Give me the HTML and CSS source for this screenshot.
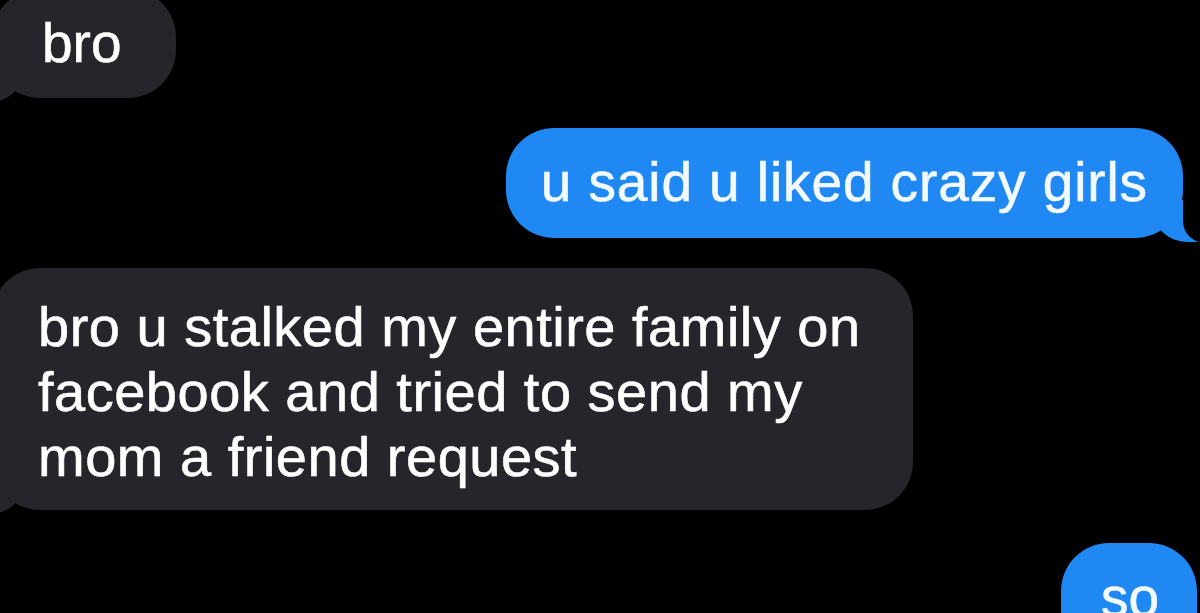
FILE: index.html
```html
<!DOCTYPE html>
<html lang="en">
<head>
<meta charset="utf-8">
<title>Messages</title>
<link rel="stylesheet" href="styles.css">
</head>
<body>
<main class="thread">
  <div class="bubble them first">bro</div>
  <div class="bubble me second">u said u liked crazy girls</div>
  <div class="bubble them third">bro u stalked my entire family on<br>facebook and tried to send my<br>mom a friend request</div>
  <div class="bubble me last">so</div>
</main>
</body>
</html>
```
FILE: styles.css
```css
html, body {
  margin: 0;
  padding: 0;
  background: #000;
  height: 100%;
  overflow: hidden;
}

.thread {
  display: flex;
  flex-direction: column;
  gap: 30px;
  font-family: "Liberation Sans", Arial, sans-serif;
  color: #fff;
}

.bubble {
  position: relative;
  font-size: 56px;
  line-height: 65px;
  border-radius: 48px;
  white-space: nowrap;
  -webkit-text-stroke: 0.6px currentColor;
}

.them {
  align-self: flex-start;
  background: #26252b;
  margin-left: -8px;
}

.me {
  align-self: flex-end;
  background: #1f88f3;
  color: #f2faff;
}

/* tails */
.them::before,
.me::before {
  content: "";
  position: absolute;
  bottom: -4px;
  width: 44px;
  height: 42px;
}
.them::after,
.me::after {
  content: "";
  position: absolute;
  bottom: -5px;
  width: 40px;
  height: 46px;
  background: #000;
}

.them::before {
  left: -14px;
  background: #26252b;
  border-bottom-right-radius: 32px 28px;
}
.them::after {
  left: -40px;
  border-bottom-right-radius: 22px;
}

.me::before {
  right: -16px;
  background: #1f88f3;
  border-bottom-left-radius: 32px 28px;
}
.me::after {
  right: -40px;
  border-bottom-left-radius: 22px;
}

.first {
  margin-top: -11px;
  padding: 22px 54px 22px 50px;
  font-size: 55px;
}

.second {
  margin-right: 17px;
  padding: 22px 35px 23px 35px;
  font-size: 55px;
  letter-spacing: 0.9px;
}

.third {
  padding: 26px 52px 21px 46px;
  letter-spacing: 0.5px;
}

.last {
  margin-top: 3px;
  margin-right: 3px;
  padding: 22px 38px 40px 40px;
  font-size: 55px;
}
```
